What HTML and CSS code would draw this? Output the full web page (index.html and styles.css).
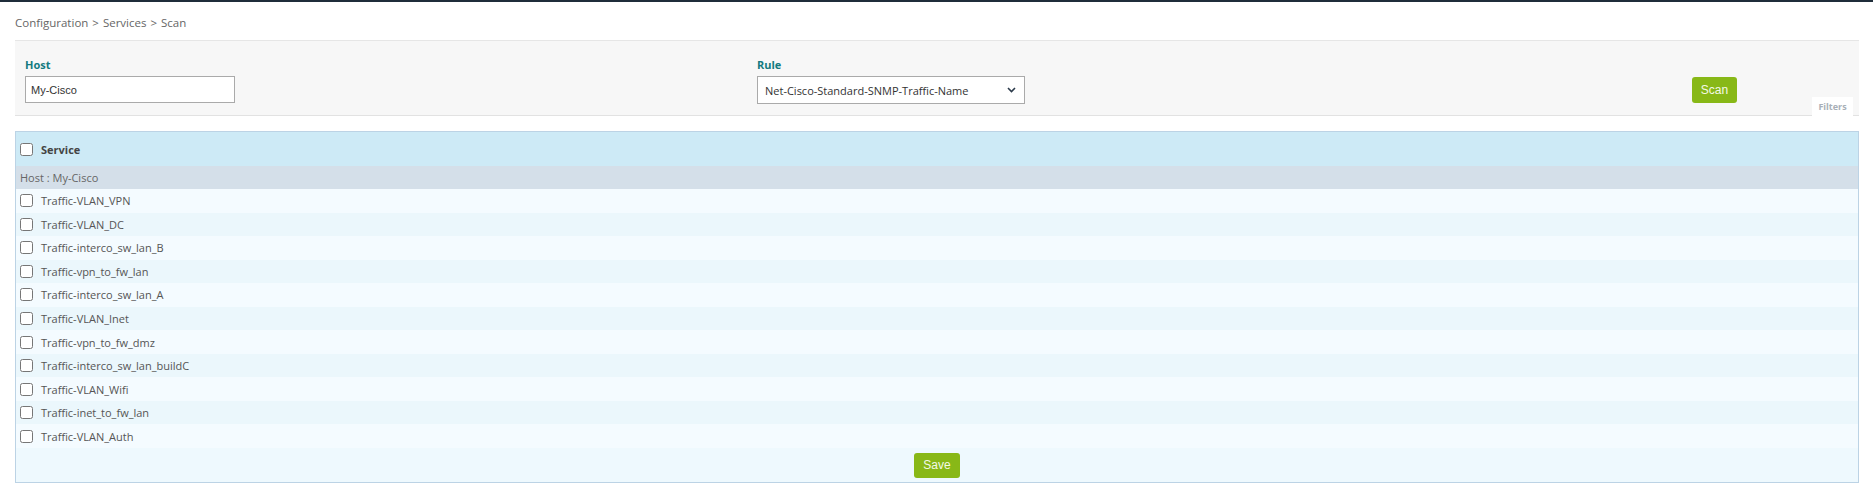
FILE: index.html
```html
<!DOCTYPE html>
<html>
<head>
<meta charset="utf-8">
<link rel="stylesheet" href="styles.css">
</head>
<body>
<div class="topbar"></div>
<div class="breadcrumb">Configuration <span class="sep">&gt;</span> Services <span class="sep">&gt;</span> Scan</div>
<div class="filters">
  <div class="field host-field">
    <label class="flabel">Host</label>
    <input class="text-input" type="text" value="My-Cisco">
  </div>
  <div class="field rule-field">
    <label class="flabel">Rule</label>
    <div class="select">
      <span>Net-Cisco-Standard-SNMP-Traffic-Name</span>
      <svg class="chev" width="9" height="6" viewBox="0 0 9 6"><path d="M1 1l3.5 3.5L8 1" fill="none" stroke="#2b3a4a" stroke-width="1.6"/></svg>
    </div>
  </div>
  <div class="scan-cell"><button class="btn">Scan</button></div>
  <div class="filters-tab">Filters</div>
</div>
<div class="table">
  <div class="thead"><input type="checkbox" class="cb"><span>Service</span></div>
  <div class="group">Host : My-Cisco</div>
  <div class="row"><input type="checkbox" class="cb"><span>Traffic-VLAN_VPN</span></div>
  <div class="row"><input type="checkbox" class="cb"><span>Traffic-VLAN_DC</span></div>
  <div class="row"><input type="checkbox" class="cb"><span>Traffic-interco_sw_lan_B</span></div>
  <div class="row"><input type="checkbox" class="cb"><span>Traffic-vpn_to_fw_lan</span></div>
  <div class="row"><input type="checkbox" class="cb"><span>Traffic-interco_sw_lan_A</span></div>
  <div class="row"><input type="checkbox" class="cb"><span>Traffic-VLAN_Inet</span></div>
  <div class="row"><input type="checkbox" class="cb"><span>Traffic-vpn_to_fw_dmz</span></div>
  <div class="row"><input type="checkbox" class="cb"><span>Traffic-interco_sw_lan_buildC</span></div>
  <div class="row"><input type="checkbox" class="cb"><span>Traffic-VLAN_Wifi</span></div>
  <div class="row"><input type="checkbox" class="cb"><span>Traffic-inet_to_fw_lan</span></div>
  <div class="row"><input type="checkbox" class="cb"><span>Traffic-VLAN_Auth</span></div>
  <div class="tfoot"><button class="btn save">Save</button></div>
</div>
</body>
</html>
```
FILE: styles.css
```css
* { box-sizing: border-box; }
body {
  margin: 0;
  font-family: "Open Sans", "Liberation Sans", sans-serif;
  background: #fff;
  color: #555;
}
.topbar {
  height: 2px;
  background: #1f2d3a;
}
.breadcrumb {
  height: 38px;
  padding: 13px 0 0 15px;
  font-size: 11.5px;
  line-height: 16px;
  color: #666;
}
.breadcrumb .sep { margin: 0 1px; }
.filters {
  position: relative;
  margin: 0 14px 0 15px;
  height: 76px;
  background: #f7f7f7;
  border-top: 1px solid #e6e6e6;
  border-bottom: 1px solid #e2e2e2;
  display: grid;
  grid-template-columns: 732px 1fr auto;
  padding: 16px 122px 0 10px;
}
.field { display: flex; flex-direction: column; }
.flabel {
  font-size: 11px;
  font-weight: 700;
  line-height: 16px;
  color: #137b80;
  margin-bottom: 3px;
}
.text-input {
  width: 210px;
  height: 27px;
  border: 1px solid #aaa;
  background: #fff;
  padding: 0 5px;
  font-family: "Liberation Sans", Arial, sans-serif;
  font-size: 11px;
  color: #333;
  outline: none;
}
.select {
  width: 268px;
  height: 28px;
  border: 1px solid #aaa;
  background: #fff;
  padding: 0 8px 0 7px;
  display: flex;
  align-items: center;
  justify-content: space-between;
  font-size: 11px;
  color: #333;
}
.scan-cell {
  display: flex;
  align-items: flex-end;
  padding-bottom: 12px;
}
.btn {
  background: #88b817;
  border: none;
  border-radius: 3px;
  color: #f4f9e6;
  font-family: "Liberation Sans", Arial, sans-serif;
  font-size: 12px;
  height: 26px;
  width: 45px;
  padding: 0;
}
.filters-tab {
  position: absolute;
  right: 6px;
  bottom: -1px;
  width: 41px;
  height: 19px;
  background: #fff;
  font-size: 9px;
  font-weight: 700;
  color: #a8afb7;
  line-height: 20px;
  text-align: center;
}
.table {
  margin: 15px 14px 0 15px;
  border: 1px solid #bcd3e5;
  background: #eef9fe;
}
.thead {
  height: 34px;
  background: #cdeaf6;
  display: flex;
  align-items: center;
  font-size: 11px;
  font-weight: 700;
  color: #444;
}
.cb {
  margin: 0 8px 0 4px;
  width: 13px;
  height: 13px;
}
.group {
  height: 23px;
  background: #d4dfe9;
  padding-left: 4px;
  font-size: 11px;
  line-height: 23px;
  color: #666;
}
.row {
  height: 23.55px;
  display: flex;
  align-items: center;
  font-size: 11px;
  color: #555;
}
.row:nth-child(odd) { background: #f4fbff; }
.row:nth-child(even) { background: #ebf7fc; }
.tfoot {
  height: 34px;
  display: flex;
  align-items: center;
  justify-content: center;
  background: #eef9fe;
}
.btn.save { width: 46px; height: 25px; }
```
